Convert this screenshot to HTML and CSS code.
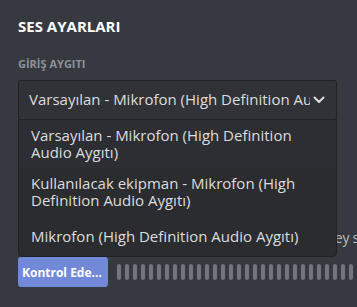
FILE: index.html
```html
<!DOCTYPE html>
<html lang="tr">
<head>
    <meta charset="UTF-8">
    <meta name="viewport" content="width=device-width, initial-scale=1.0">
    <title>Ses Ayarları</title>
    <link rel="stylesheet" href="styles.css">
</head>
<body>
    <div class="settings">
        <h2 class="title">SES AYARLARI</h2>
        <h5 class="label">GİRİŞ AYGITI</h5>
        <div class="select-wrap">
            <div class="select">
                <span class="select-value">Varsayılan - Mikrofon (High Definition Audio Aygıtı)</span>
                <svg class="chevron" width="12" height="8" viewBox="0 0 12 8">
                    <path d="M1.5 1.5 L6 6 L10.5 1.5" fill="none" stroke="#dcddde" stroke-width="2" stroke-linecap="round" stroke-linejoin="round"/>
                </svg>
            </div>
            <div class="menu">
                <div class="option selected">Varsayılan - Mikrofon (High Definition Audio Aygıtı)</div>
                <div class="option">Kullanılacak ekipman - Mikrofon (High Definition Audio Aygıtı)</div>
                <div class="option">Mikrofon (High Definition Audio Aygıtı)</div>
            </div>
        </div>
        <h5 class="label test-label">MİKROFON TESTİ</h5>
        <p class="desc">Mikrofonunla ilgili sorun mu yaşıyorsun? Tek bir şey söyle, sesini sana geri çalacağız.</p>
        <div class="test-row">
            <button class="test-btn">Kontrol Edelim</button>
            <div class="meter">
                <span></span><span></span><span></span><span></span><span></span><span></span>
                <span></span><span></span><span></span><span></span><span></span><span></span>
                <span></span><span></span><span></span><span></span><span></span><span></span>
                <span></span><span></span><span></span><span></span><span></span><span></span>
                <span></span><span></span><span></span><span></span><span></span><span></span>
                <span></span><span></span>
            </div>
        </div>
    </div>
</body>
</html>
```

FILE: styles.css
```css
body {
    margin: 0;
    background: #36393f;
    font-family: "Open Sans", "Noto Sans", sans-serif;
    color: #dcddde;
    overflow: hidden;
}
.settings {
    padding: 16px 0 0 18px;
    width: 500px;
}
.title {
    margin: 0 0 20px;
    font-size: 15px;
    line-height: 20px;
    font-weight: 700;
    color: #fff;
}
.label {
    margin: 0 0 8px;
    font-size: 11px;
    line-height: 16px;
    font-weight: 700;
    color: #8e9297;
}
.select-wrap {
    position: relative;
    width: 319px;
}
.select {
    display: flex;
    align-items: center;
    height: 38px;
    padding: 0 11px 0 10px;
    background: #303237;
    border: 1px solid #212226;
    border-radius: 3px;
    font-size: 15px;
    line-height: 20px;
}
.select-value {
    flex: 1;
    white-space: nowrap;
    overflow: hidden;
    margin-top: -3px;
    margin-right: 3px;
}
.chevron {
    flex: none;
}
.menu {
    position: absolute;
    top: 39px;
    left: 0;
    right: 0;
    background: #2a2c30;
    border: 1px solid #212226;
    border-radius: 0 0 4px 4px;
    z-index: 2;
}
.option {
    display: flex;
    align-items: center;
    min-height: 40px;
    box-sizing: border-box;
    padding: 7px 12px;
    font-size: 15px;
    line-height: 17px;
}
.option.selected {
    background: #2c2e33;
}
.test-label {
    margin-top: 22px;
}
.desc {
    margin: 0 0 10px;
    padding-top: 63px;
    font-size: 14px;
    line-height: 18px;
    word-spacing: -0.7px;
    color: #b9bbbe;
    white-space: nowrap;
}
.test-row {
    display: flex;
    align-items: center;
    gap: 9px;
}
.test-btn {
    width: 90px;
    height: 30px;
    padding: 0 5px 0 4px;
    background: #7289da;
    color: #fff;
    border: none;
    border-radius: 3px;
    font-family: inherit;
    font-size: 12px;
    font-weight: 700;
    white-space: nowrap;
    overflow: hidden;
    text-overflow: ellipsis;
    text-align: left;
}
.meter {
    display: flex;
    gap: 4px;
}
.meter span {
    width: 4px;
    height: 16px;
    border-radius: 2px;
    background: #72767d;
}
```
